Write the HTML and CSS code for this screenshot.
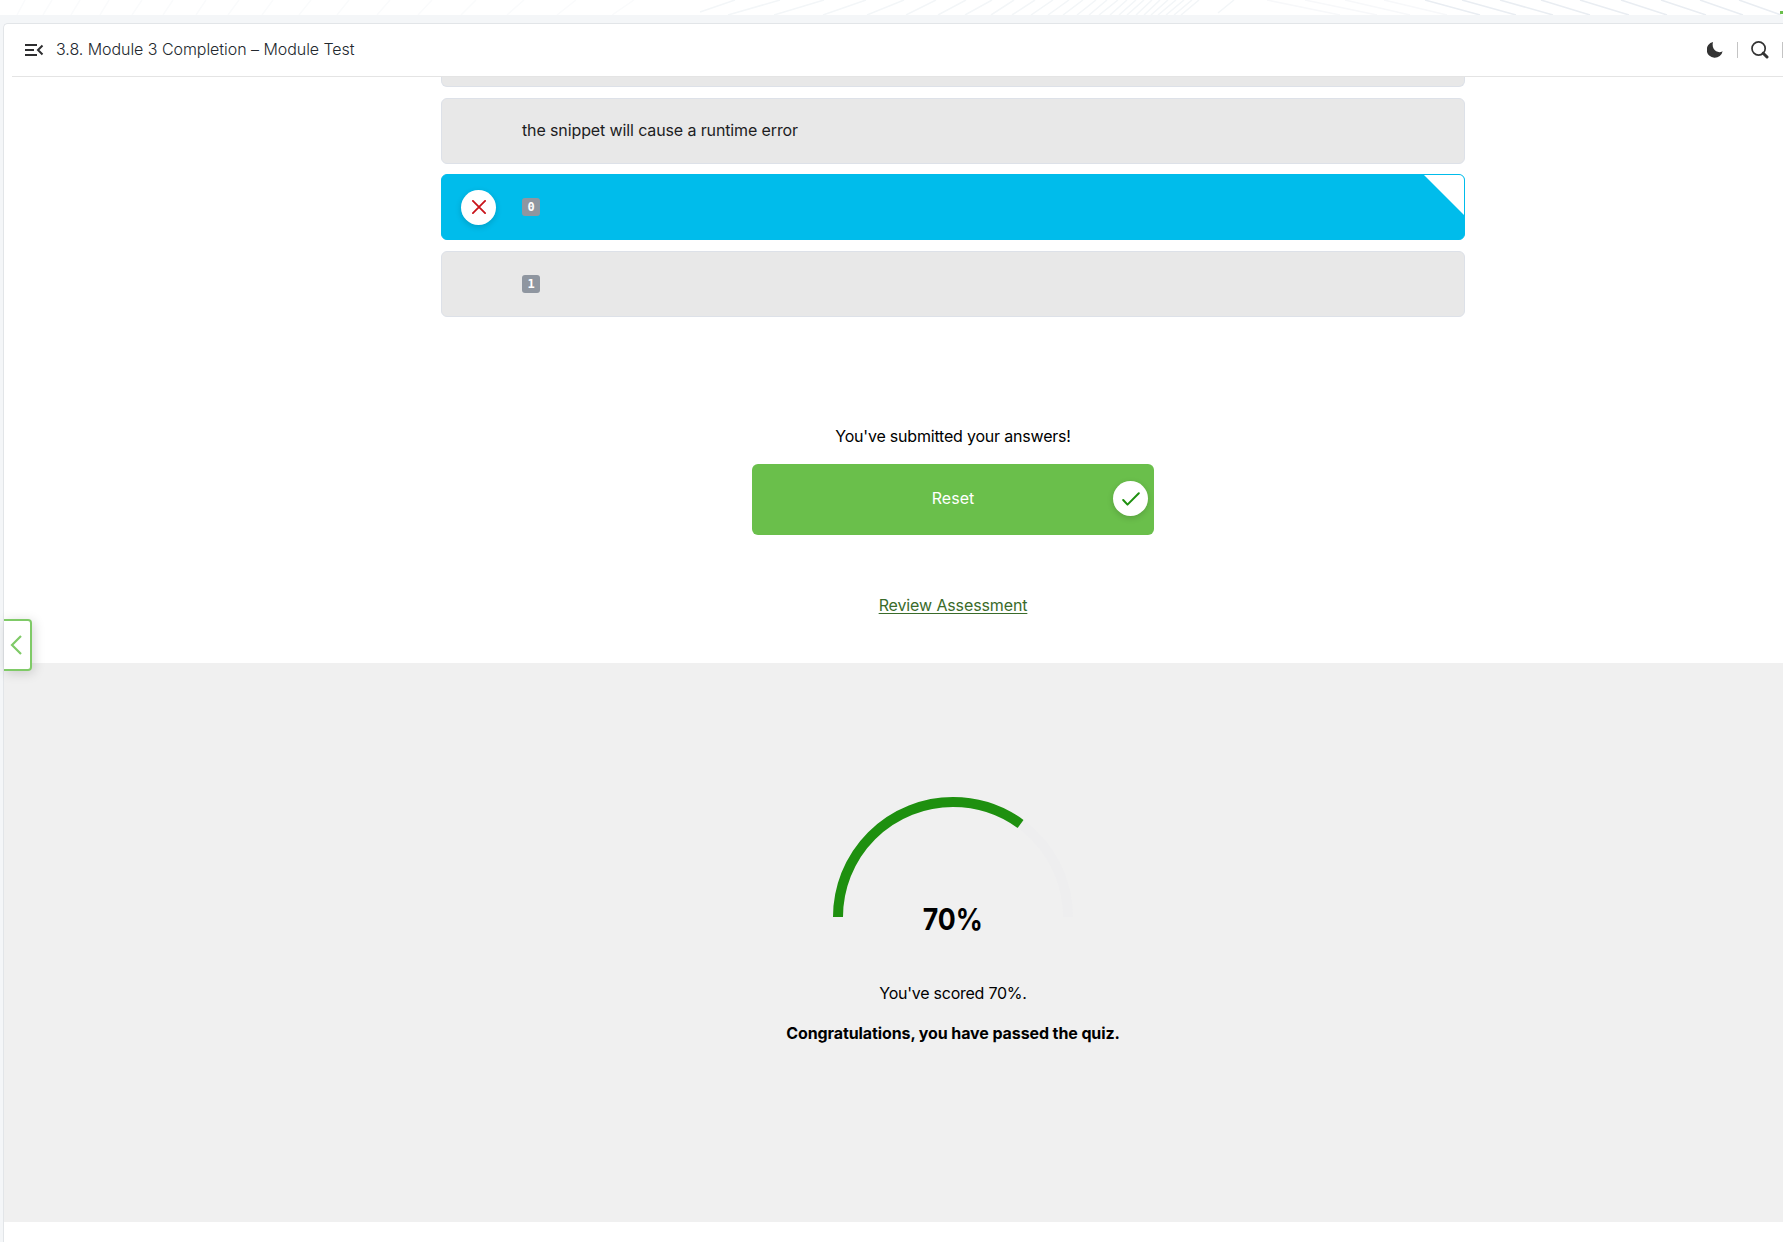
FILE: index.html
```
<!DOCTYPE html>
<html lang="en">
<head>
<meta charset="utf-8">
<title>3.8. Module 3 Completion – Module Test</title>
<link rel="stylesheet" href="styles.css">
</head>
<body>
<div class="banner">
  <svg class="banner-lines" width="1783" height="15" viewBox="0 0 1783 15" fill="none">
    <g stroke="#fafbfc" stroke-width="1.5">
      <path d="M25 0L17 15M52 0L43 15M80 0L71 15M109 0L100 15M142 0L132 15M173 0L163 15M206 0L196 15M239 0L228 15M273 0L262 15M311 0L299 15M349 0L337 15M390 0L377 15M432 0L418 15M476 0L461 15M524 0L507 15M576 0L557 15M634 0L612 15"/>
    </g>
    <g stroke="#f3f6f8" stroke-width="1.5">
      <path d="M735 0L700 12M780 0L728 15M824 0L774 15M866 0L823 15M904 0L867 15M936 0L906 15M966 0L938 15M992 0L965 15M1014 0L991 15M1035 0L1012 15M1053 0L1031 15M1069 0L1048 15M1083 0L1063 15M1096 0L1077 15M1107 0L1089 15M1118 0L1099 15M1127 0L1110 15M1136 0L1119 15M1144 0L1127 15M1152 0L1136 15M1160 0L1144 15M1168 0L1151 15M1176 0L1158 15M1184 0L1166 15M1192 0L1174 15M1199 0L1181 15M1234 0L1218 13"/>
    </g>
    <g stroke="#f7f8fa" stroke-width="1.5">
      <path d="M1267 0L1340 15M1305 0L1377 15M1345 0L1410 15M1384 0L1447 15"/>
    </g>
    <g stroke="#e9edf2" stroke-width="1.5">
      <path d="M1425 0L1480 15M1462 0L1516 15M1500 0L1553 15M1541 0L1590 15M1580 0L1629 15M1621 0L1667 15M1661 0L1706 15M1700 0L1743 15M1739 0L1781 15"/>
    </g>
    <path d="M1780 11h3v3h-3z" fill="#6abf4b"/>
  </svg>
</div>
<div class="panel">
  <header class="header">
    <svg class="menu-icon" width="20" height="16" viewBox="0 0 20 16" fill="none" stroke="#2e2e30" stroke-width="2">
      <path d="M1 3h12M1 8h9M1 13h12M18.500 3.500L14 8l4.500 4.500"/>
    </svg>
    <h1 class="title">3.8. Module 3 Completion <span class="dash">–</span> Module Test</h1>
    <div class="tools">
      <svg class="moon" width="16" height="16" viewBox="0 0 16 16"><path d="M6 0A8 8 0 1 0 15.600 9.200Q12.500 11 9.200 9.300Q4.500 6.300 6 0Z" fill="#333"/></svg>
      <span class="divider"></span>
      <svg width="18" height="18" viewBox="0 0 18 18" fill="none" stroke="#333"><circle cx="7.600" cy="7.500" r="6.600" stroke-width="1.700"/><path d="M12.200 12.200L16 16" stroke-width="3" stroke-linecap="round"/></svg>
      <span class="divider"></span>
    </div>
  </header>
  <main>
    <section class="options">
      <div class="option option-cut"></div>
      <div class="option"><span class="option-text">the snippet will cause a runtime error</span></div>
      <div class="option selected">
        <span class="badge"><svg width="14" height="14" viewBox="0 0 14 14" fill="none" stroke="#c9131a" stroke-width="1.800" stroke-linecap="round"><path d="M.9.9l12.200 12.200M13.100.9L.9 13.100"/></svg></span>
        <code>0</code>
      </div>
      <div class="option"><code>1</code></div>
    </section>
    <section class="actions">
      <p class="submitted">You've submitted your answers!</p>
      <button class="reset"><span class="reset-label">Reset</span>
        <span class="badge"><svg width="18" height="14" viewBox="0 0 18 14" fill="none" stroke="#1e900f" stroke-width="2" stroke-linecap="round" stroke-linejoin="round"><path d="M1.200 8l4.300 4.600L16.800 1.200"/></svg></span>
      </button>
      <a class="review" href="#">Review Assessment</a>
    </section>
    <section class="results">
      <svg class="gauge" width="240" height="120" viewBox="0 0 240 120" fill="none" stroke-width="10">
        <path d="M5 120A115 115 0 0 1 235 120" stroke="#eeeeef"/>
        <path d="M5 120A115 115 0 0 1 235 120" stroke="#1e900f" pathLength="100" stroke-dasharray="70 100"/>
      </svg>
      <strong class="percent">70%</strong>
      <p class="scored">You've scored 70%.</p>
      <p class="passed">Congratulations, you have passed the quiz.</p>
    </section>
  </main>
  <button class="drawer" aria-label="Previous"><svg width="12" height="20" viewBox="0 0 12 20" fill="none" stroke="#7fca67" stroke-width="2.200"><path d="M11 1L2 10l9 9"/></svg></button>
</div>
</body>
</html>
```
FILE: styles.css
```
* { box-sizing: border-box; }
body {
  margin: 0;
  height: 1242px;
  overflow: hidden;
  background: #f4f6f8;
  font-family: Inter, "Liberation Sans", sans-serif;
  font-size: 16px;
  line-height: 24px;
  color: #000;
}
.banner { height: 15px; margin-bottom: 8px; background: #fff; }
.banner-lines { display: block; }
.panel {
  position: relative;
  height: 1230px;
  margin-left: 3px;
  background: #fff;
  border: solid #e2e5e8;
  border-width: 1px 0 0 1px;
  border-radius: 5px 0 0 0;
}
.header {
  display: flex;
  align-items: center;
  height: 53px;
  margin-left: 8px;
  padding-left: 12px;
  border-bottom: 1px solid #e4e4e4;
}
.title {
  margin: 0 0 2px 12px;
  font-size: 16px;
  font-weight: 300;
  letter-spacing: -.05px;
  color: #23282e;
  white-space: nowrap;
}
.tools { display: flex; align-items: center; gap: 13px; margin-left: auto; }
.tools svg { display: block; }
.tools .moon { margin-right: 1px; }
.divider { width: 1px; height: 16px; background: #c4c4c4; }
.options, .actions, .results { padding-left: 119px; }
.option {
  position: relative;
  display: flex;
  align-items: center;
  width: 1024px;
  height: 66px;
  margin: 0 auto 11px;
  padding-left: 80px;
  background: #e8e8e8;
  border: 1px solid #dde1e8;
  border-radius: 6px;
  color: #1d1d1f;
}
.option-cut { height: 10px; border-top: 0; border-radius: 0 0 6px 6px; }
.option:nth-child(2) { margin-bottom: 10px; }
.option-text { margin-bottom: 2px; letter-spacing: -.12px; }
.selected { background: #00bceb; border-color: #00bceb; overflow: hidden; }
.selected::after {
  content: "";
  position: absolute;
  top: 0;
  right: 0;
  width: 40px;
  height: 40px;
  background: #fff;
  clip-path: polygon(0 0, 100% 0, 100% 100%);
}
.badge {
  display: flex;
  align-items: center;
  justify-content: center;
  width: 35px;
  height: 35px;
  border-radius: 50%;
  background: #fff;
  box-shadow: 0 2px 6px rgba(0, 0, 0, .16);
}
.option .badge { margin: 0 26px 0 -61px; }
code {
  width: 18px;
  height: 18px;
  border-radius: 3px;
  background: #8f96a0;
  color: #fff;
  font: bold 12px/19px "DejaVu Sans Mono", monospace;
  text-align: center;
}
.actions { display: flex; flex-direction: column; align-items: center; height: 335px; padding-top: 96px; }
.submitted { margin: 0 0 16px; letter-spacing: -.2px; }
.reset {
  display: flex;
  align-items: center;
  width: 402px;
  height: 71px;
  padding: 0 6px 2px;
  border: 0;
  border-radius: 6px;
  background: #6abf4b;
  color: #fff;
  font: inherit;
}
.reset-label { flex: 1; padding: 0 0 2px 35px; text-align: center; }
.review {
  margin-top: 58px;
  color: #3a6b2a;
  letter-spacing: -.12px;
  text-decoration-thickness: 1px;
  text-underline-offset: 2px;
}
.results {
  display: flex;
  flex-direction: column;
  align-items: center;
  height: 559px;
  padding-top: 134px;
  background: #f0f0f0;
}
.percent {
  margin-top: -15px;
  font-size: 30px;
  line-height: 34px;
  font-weight: 700;
  transform: scaleX(.89);
}
.results p { margin: 0; }
.results .scored { margin-top: 45px; letter-spacing: -.25px; }
.results .passed { margin-top: 16px; font-weight: 700; letter-spacing: -.1px; }
.drawer {
  position: absolute;
  left: 0;
  top: 595px;
  display: flex;
  align-items: center;
  width: 28px;
  height: 52px;
  padding: 0 0 0 6px;
  border: 2px solid #7fca67;
  border-left: 0;
  border-radius: 0 4px 4px 0;
  background: rgba(255, 255, 255, .9);
  box-shadow: 2px 2px 12px rgba(0, 0, 0, .16);
}
```
